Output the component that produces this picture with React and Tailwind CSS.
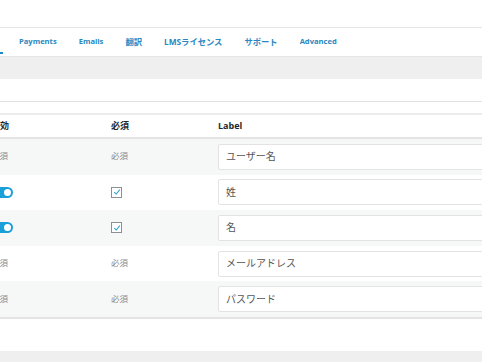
import React from 'react';

const tabs = [
    { t: 'Payments', cls: 'text-[7.6px]' },
    { t: 'Emails', cls: 'text-[7.6px]' },
    { t: '翻訳', cls: 'text-[8.3px]' },
    { t: 'LMSライセンス', cls: 'text-[8.3px]' },
    { t: 'サポート', cls: 'text-[8.3px]' },
    { t: 'Advanced', cls: 'text-[7.6px]' },
];

const rows = [
    { type: 'text', label: 'ユーザー名', bg: 'bg-[#f6f7f7]' },
    { type: 'toggle', label: '姓', bg: 'bg-white' },
    { type: 'toggle', label: '名', bg: 'bg-[#f6f7f7]' },
    { type: 'text', label: 'メールアドレス', bg: 'bg-white' },
    { type: 'text', label: 'パスワード', bg: 'bg-[#f6f7f7]' },
];

const Toggle = () => (
    <span className="relative inline-block w-[22px] h-[11px] rounded-full bg-[#1a9fd9]">
        <span className="absolute right-[2px] top-[2px] w-[7px] h-[7px] rounded-full bg-white" />
    </span>
);

const Check = () => (
    <span className="inline-flex items-center justify-center w-[11px] h-[11px] border border-[#8c8f94] bg-white">
        <svg viewBox="0 0 10 10" className="w-[8px] h-[8px]">
            <path d="M1.5 5.2 L4 7.5 L8.5 2" fill="none" stroke="#2ea2cc" strokeWidth="1.3" />
        </svg>
    </span>
);

const App = () => {
    return (
        <div className="w-[482px] h-[362px] overflow-hidden bg-white" style={{ fontFamily: '"Open Sans", "Noto Sans CJK JP", sans-serif' }}>
            <div className="h-[27px]" />
            {/* tab bar */}
            <div className="h-[30px] border-t border-b border-[#e6e6e6] flex items-stretch">
                <div className="relative w-[8px]">
                    <span className="absolute left-0 bottom-[2px] w-[3px] h-[2px] bg-[#1a8ac7]" />
                </div>
                {tabs.map(({ t, cls }) => (
                    <div key={t} className={`px-[11px] flex items-center font-bold text-[#2a87c0] whitespace-nowrap ${cls}`}>
                        {t}
                    </div>
                ))}
            </div>
            <div className="h-[22px] bg-[#efefef]" />
            <div className="h-[23px] border-b border-[#e2e2e2]" />
            <div className="h-[11px]" />
            {/* table */}
            <div className="-ml-[9px] border-t-[2px] border-[#ececec]">
                <div className="h-[24px] flex items-center border-b-[2px] border-[#e4e4e4] text-[9px] font-bold text-[#23282d]">
                    <div className="w-[120px] shrink-0">有効</div>
                    <div className="w-[107px] shrink-0">必須</div>
                    <div>Label</div>
                </div>
                {rows.map((r) => (
                    <div key={r.label} className={`h-[35.6px] flex items-center ${r.bg}`}>
                        <div className="w-[120px] shrink-0 flex items-center">
                            {r.type === 'toggle' ? <Toggle /> : <span className="text-[8.5px] text-[#8a8a8a]">必須</span>}
                        </div>
                        <div className="w-[107px] shrink-0 flex items-center">
                            {r.type === 'toggle' ? <Check /> : <span className="text-[8.5px] text-[#8a8a8a]">必須</span>}
                        </div>
                        <div className="w-[300px] shrink-0 h-[26px] border border-[#e3e3e3] rounded-[2px] bg-white flex items-center pl-[7px] text-[10px] text-[#555]">
                            {r.label}
                        </div>
                    </div>
                ))}
                <div className="border-t-[2px] border-[#e4e4e4]" />
            </div>
            <div className="h-[32px]" />
            <div className="h-[14px] bg-[#efefef]" />
        </div>
    );
};

export default App;
